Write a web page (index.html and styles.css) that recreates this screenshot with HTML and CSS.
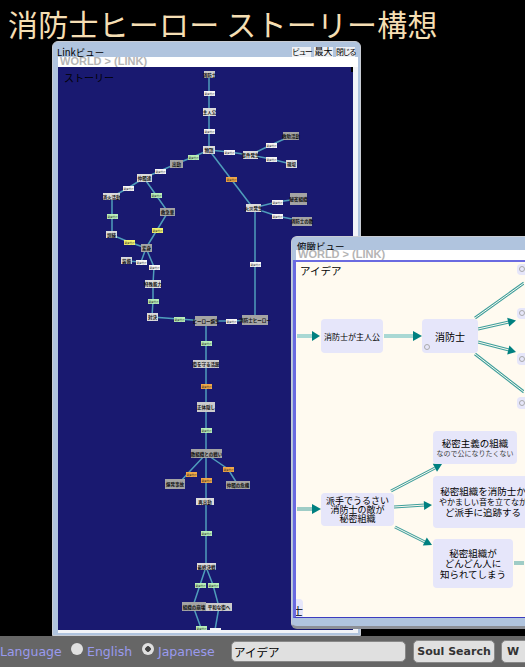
FILE: index.html
```html
<!DOCTYPE html>
<html lang="ja">
<head>
<meta charset="utf-8">
<title>消防士ヒーロー ストーリー構想</title>
<link rel="stylesheet" href="styles.css">
</head>
<body>
<h1 class="page-title">消防士ヒーロー ストーリー構想</h1>
<main class="desktop">
  <section class="win win-link">
    <header class="win-head">
      <span class="win-title">Linkビュー</span>
      <span class="win-actions"><button class="act act-3">ビュー</button><button class="act act-2">最大</button><button class="act act-3">閉じる</button></span>
    </header>
    <div class="crumb">WORLD &gt; (LINK)</div>
    <div class="view view-link">
      <span class="view-name">ストーリー</span>
      <span class="scroll-mark"></span>
      <svg class="graph" viewBox="58 67 295 564" width="295" height="564">
        <g class="links">
          <polyline points="209,74 209,150"/>
          <polyline points="209,150 229,152 250,155"/>
          <polyline points="250,155 271,145 291,136"/>
          <polyline points="250,155 271,159 291,164"/>
          <polyline points="209,150 231,179 253,208"/>
          <polyline points="253,208 277,202 298,199"/>
          <polyline points="253,208 277,216 302,221"/>
          <polyline points="209,150 193,157 176,164 160,171 144,178 128,188 112,197 112,235 129,242 146,248"/>
          <polyline points="144,178 156,195 168,212 157,230 146,248"/>
          <polyline points="146,248 141,262 127,261"/>
          <polyline points="146,248 154,267 153,284 153,301 152,317 179,319 206,321 231,321 255,320"/>
          <polyline points="255,208 255,320"/>
          <polyline points="206,321 206,567"/>
          <polyline points="206,454 191,470 180,482"/>
          <polyline points="206,454 228,469 238,485"/>
          <polyline points="206,567 200,585 193,606 201,628 203,634"/>
          <polyline points="206,567 213,585 219,607 215,630 214,634"/>
        </g>
        <g class="edges">
          <rect x="204" y="91" width="11" height="5"/><text x="209.500" y="95">関連付け</text>
          <rect x="204" y="129" width="11" height="5"/><text x="209.500" y="133">関連付け</text>
          <rect x="224" y="150" width="11" height="5"/><text x="229.500" y="154">関連付け</text>
          <rect x="266" y="143" width="11" height="5"/><text x="271.500" y="147">関連付け</text>
          <rect x="266" y="157" width="11" height="5"/><text x="271.500" y="161">関連付け</text>
          <rect class="e-orange" x="226" y="177" width="11" height="5"/><text x="231.500" y="181">関連付け</text>
          <rect x="272" y="200" width="11" height="5"/><text x="277.500" y="204">関連付け</text>
          <rect x="272" y="214" width="11" height="5"/><text x="277.500" y="218">関連付け</text>
          <rect class="e-green" x="188" y="155" width="11" height="5"/><text x="193.500" y="159">関連付け</text>
          <rect x="155" y="169" width="11" height="5"/><text x="160.500" y="173">関連付け</text>
          <rect x="123" y="186" width="11" height="5"/><text x="128.500" y="190">関連付け</text>
          <rect class="e-green" x="107" y="214" width="11" height="5"/><text x="112.500" y="218">関連付け</text>
          <rect class="e-yellow" x="124" y="240" width="11" height="5"/><text x="129.500" y="244">関連付け</text>
          <rect class="e-green" x="151" y="193" width="11" height="5"/><text x="156.500" y="197">関連付け</text>
          <rect class="e-yellow" x="152" y="228" width="11" height="5"/><text x="157.500" y="232">関連付け</text>
          <rect x="136" y="260" width="11" height="5"/><text x="141.500" y="264">関連付け</text>
          <rect x="149" y="265" width="11" height="5"/><text x="154.500" y="269">関連付け</text>
          <rect class="e-green" x="148" y="299" width="11" height="5"/><text x="153.500" y="303">関連付け</text>
          <rect class="e-green" x="174" y="317" width="11" height="5"/><text x="179.500" y="321">関連付け</text>
          <rect x="226" y="319" width="11" height="5"/><text x="231.500" y="323">関連付け</text>
          <rect x="250" y="262" width="11" height="5"/><text x="255.500" y="266">関連付け</text>
          <rect class="e-green" x="201" y="341" width="11" height="5"/><text x="206.500" y="345">関連付け</text>
          <rect class="e-orange" x="201" y="384" width="11" height="5"/><text x="206.500" y="388">関連付け</text>
          <rect class="e-green" x="201" y="428" width="11" height="5"/><text x="206.500" y="432">関連付け</text>
          <rect class="e-orange" x="186" y="472" width="11" height="5"/><text x="191.500" y="476">関連付け</text>
          <rect class="e-orange" x="223" y="467" width="11" height="5"/><text x="228.500" y="471">関連付け</text>
          <rect class="e-orange" x="201" y="478" width="11" height="5"/><text x="206.500" y="482">関連付け</text>
          <rect class="e-green" x="201" y="531" width="11" height="5"/><text x="206.500" y="535">関連付け</text>
          <rect class="e-green" x="195" y="583" width="11" height="5"/><text x="200.500" y="587">関連付け</text>
          <rect class="e-green" x="208" y="583" width="11" height="5"/><text x="213.500" y="587">関連付け</text>
          <rect class="e-green" x="196" y="626" width="11" height="5"/><text x="201.500" y="630">関連付け</text>
          <rect x="210" y="628" width="11" height="3"/>
        </g>
        <g class="nodes">
          <rect class="n-grey" x="204" y="71" width="11" height="7"/><text x="209.500" y="76.500">消防士</text>
          <rect x="203" y="108" width="13" height="8"/><text x="209.500" y="114">主人公</text>
          <rect x="203" y="146" width="12" height="8"/><text x="209" y="152">物語</text>
          <rect x="243" y="151" width="15" height="8"/><text x="250.500" y="157">事件発生</text>
          <rect class="n-dark" x="283" y="132" width="16" height="8"/><text x="291" y="138">救助活動</text>
          <rect x="286" y="160" width="11" height="8"/><text x="291.500" y="166">現場</text>
          <rect x="246" y="204" width="15" height="8"/><text x="253.500" y="210">火災発生</text>
          <rect class="n-dark" x="290" y="193" width="17" height="12"/><text x="298.500" y="201">秘密組織</text>
          <rect class="n-dark" x="292" y="217" width="20" height="9"/><text x="302" y="223">消防士の敵</text>
          <rect class="n-dark" x="170" y="160" width="13" height="8"/><text x="176.500" y="166">出動</text>
          <rect x="137" y="174" width="15" height="8"/><text x="144.500" y="180">仲間達</text>
          <rect x="103" y="193" width="17" height="7"/><text x="111.500" y="199">消火活動</text>
          <rect x="106" y="231" width="11" height="7"/><text x="111.500" y="236.500">訓練</text>
          <rect class="n-dark" x="160" y="208" width="15" height="8"/><text x="167.500" y="214">救急車</text>
          <rect class="n-dark" x="141" y="244" width="11" height="8"/><text x="146.500" y="250">変身</text>
          <rect x="121" y="257" width="11" height="7"/><text x="126.500" y="262.500">装備</text>
          <rect x="145" y="280" width="16" height="8"/><text x="153" y="286">特殊能力</text>
          <rect x="147" y="313" width="11" height="8"/><text x="152.500" y="319">対決</text>
          <rect class="n-dark" x="195" y="316" width="22" height="10"/><text x="206" y="323">ヒーロー誕生</text>
          <rect class="n-dark" x="242" y="315" width="26" height="10"/><text x="255" y="322">消防士ヒーロー</text>
          <rect class="n-grey" x="193" y="360" width="26" height="8"/><text x="206" y="366">街を守る活躍</text>
          <rect class="n-grey" x="197" y="402" width="18" height="10"/><text x="206" y="409">正体隠し</text>
          <rect class="n-dark" x="191" y="449" width="31" height="9"/><text x="206.500" y="455.500">敵組織との戦い</text>
          <rect class="n-dark" x="165" y="479" width="20" height="10"/><text x="175" y="486">爆発事故</text>
          <rect class="n-dark" x="226" y="481" width="24" height="8"/><text x="238" y="487">仲間の危機</text>
          <rect x="196" y="498" width="18" height="7"/><text x="205" y="503.500">再出動</text>
          <rect x="197" y="563" width="19" height="7"/><text x="206.500" y="568.500">最終決戦</text>
          <rect class="n-dark" x="182" y="602" width="24" height="9"/><text x="194" y="608.500">組織の崩壊</text>
          <rect class="n-grey" x="206" y="603" width="26" height="8"/><text x="219" y="609">平和な街へ</text>
        </g>
      </svg>
    </div>
  </section>

  <section class="win win-bird">
    <header class="win-head">
      <span class="win-title">俯瞰ビュー</span>
    </header>
    <div class="crumb">WORLD &gt; (LINK)</div>
    <div class="view view-bird">
      <span class="view-name">アイデア</span>
      <svg class="arrows" viewBox="297 261 228 358" width="228" height="358">
        <defs>
          <g id="rails">
            <line x1="476" y1="317" x2="525" y2="282"/>
            <line x1="479" y1="328" x2="510" y2="321"/>
            <line x1="479" y1="341" x2="510" y2="349"/>
            <line x1="476" y1="353" x2="525" y2="391"/>
            <line x1="298" y1="508" x2="314" y2="508"/>
            <line x1="392" y1="490" x2="436" y2="467"/>
            <line x1="395" y1="506" x2="426" y2="504"/>
            <line x1="396" y1="526" x2="426" y2="541"/>
            <line x1="515" y1="562" x2="525" y2="562"/>
          </g>
        </defs>
        <g class="pale">
          <line x1="298" y1="335" x2="314" y2="335"/>
          <line x1="385" y1="335" x2="415" y2="335"/>
        </g>
        <use class="rail" href="#rails"/>
        <use class="rail-core" href="#rails"/>
        <g class="heads">
          <polygon points="313,330 321,335 313,340"/>
          <polygon points="414,330 423,335 414,340"/>
          <polygon points="510.200,325.600 517,319.500 508.200,316.800"/>
          <polygon points="508.200,353.400 517,351 510.400,344.600"/>
          <polygon points="313,503 322,508 313,513"/>
          <polygon points="438,470.700 443,463 433.800,462.700"/>
          <polygon points="425.200,508.900 433,504 424.800,499.900"/>
          <polygon points="423.800,544.500 433,544 427.800,536.500"/>
        </g>
      </svg>
      <div class="card card-hero card-s">消防士が主人公</div>
      <div class="card card-fire card-m has-dot">消防士</div>
      <div class="card stub stub-1 has-dot"></div>
      <div class="card stub stub-2 has-dot"></div>
      <div class="card stub stub-3 has-dot"></div>
      <div class="card stub stub-4 has-dot"></div>
      <div class="card card-enemy card-l">派手でうるさい<br>消防士の敵が<br>秘密組織</div>
      <div class="card card-secret"><span class="big">秘密主義の組織</span><span class="sub">なので公になりたくない</span></div>
      <div class="card card-chase"><span class="big">秘密組織を消防士か</span><span class="mid">やかましい音を立てなが</span><span class="big">ど派手に追跡する</span></div>
      <div class="card card-known card-xl">秘密組織が<br>どんどん人に<br>知られてしまう</div>
      <div class="card card-edge">士</div>
    </div>
  </section>
</main>
<footer class="bar">
  <span class="lang-label">Language</span>
  <label class="lang-opt lang-en"><input class="radio" type="radio" name="lang">English</label>
  <label class="lang-opt lang-ja"><input class="radio" type="radio" name="lang" checked>Japanese</label>
  <input class="search" type="text" value="アイデア">
  <button class="btn btn-soul">Soul Search</button>
  <button class="btn btn-w">W</button>
</footer>
</body>
</html>
```

FILE: styles.css
```css
* { box-sizing: border-box; }

html, body {
  margin: 0;
  height: 667px;
  overflow: hidden;
  background: #000;
}

body {
  display: flex;
  flex-direction: column;
  font-family: "Noto Sans CJK JP", "Liberation Sans", sans-serif;
}

.page-title {
  flex: none;
  height: 41px;
  margin: 0;
  padding: 5px 0 0 8px;
  font-size: 30px;
  line-height: 36px;
  font-weight: 400;
  letter-spacing: 0.200px;
  color: #f5deb3;
  white-space: nowrap;
}

.desktop {
  position: relative;
  flex: none;
  height: 595px;
  overflow: hidden;
}

/* windows on the desktop */
.win {
  position: absolute;
  display: flex;
  flex-direction: column;
  background: #b0c4de;
  border: 1px solid #c8ccd4;
  border-radius: 6px 6px 0 0;
}

.win-link {
  left: 52px;
  top: 0;
  width: 309px;
  height: 595px;
  padding: 0 2px 2px 5px;
}

.win-bird {
  left: 291px;
  top: 195px;
  width: 300px;
  height: 393px;
  padding: 0 0 8px 1px;
  border-radius: 6px 0 0 6px;
  border-bottom: 3px solid #8c8f96;
  z-index: 1;
}

.win-head {
  flex: none;
  display: flex;
  justify-content: space-between;
  height: 15px;
  padding-top: 4px;
  font-size: 9.500px;
  line-height: 12px;
  color: #000;
}

.win-bird .win-head {
  height: 13px;
  padding: 3px 0 0 4px;
}

.win-title {
  margin-left: -1px;
  white-space: nowrap;
}

.win-bird .win-title { margin-left: 0; }

.win-actions {
  display: flex;
  gap: 3px;
  margin: 1px 3px 0 0;
}

.act {
  display: block;
  width: 19px;
  height: 10px;
  padding: 0;
  border: 0;
  background: #eef0f4;
  font-family: inherit;
  font-size: 9px;
  line-height: 10px;
  color: #000;
  white-space: nowrap;
}

.act-3 {
  font-size: 8px;
  letter-spacing: -1.600px;
}

.crumb {
  flex: none;
  height: 10px;
  padding-left: 2px;
  background: #fff;
  font-family: "Liberation Sans", sans-serif;
  font-size: 11px;
  font-weight: 700;
  line-height: 8px;
  color: #b4b4b4;
  white-space: nowrap;
}

.win-bird .crumb { margin-left: 3px; }

.view {
  position: relative;
  flex: 1;
  min-height: 0;
  overflow: hidden;
}

.view-link {
  background: #191970;
  border-right: 5px solid #f2f4f8;
  border-bottom: 3px solid #f2f4f8;
}

.view-bird {
  background: #fffaf0;
  border-top: 2px solid #6a6ae0;
  border-left: 3px solid #6a6ae0;
  border-bottom: 1px solid #3c3cc0;
}

.view-name {
  position: absolute;
  z-index: 2;
  font-size: 10px;
  line-height: 12px;
  color: #000;
}

.view-link .view-name { left: 6px; top: 5px; }
.view-bird .view-name { left: 4px; top: 3px; font-size: 10.500px; }

.scroll-mark {
  position: absolute;
  top: 0;
  right: 0;
  width: 2px;
  height: 5px;
  background: #000;
}

/* Link graph */
.graph { display: block; }

.links polyline {
  fill: none;
  stroke: #4f9dbb;
  stroke-width: 1.500;
}

.edges rect { fill: #f6f6f6; }
.edges .e-green { fill: #b8eeb8; }
.edges .e-yellow { fill: #f4f470; }
.edges .e-orange { fill: #f0a848; }

.edges text {
  font-size: 2.500px;
  text-anchor: middle;
  fill: #222;
}

.nodes rect { fill: #dcdcdc; }
.nodes .n-grey { fill: #cccccc; }
.nodes .n-dark { fill: #a4a4a4; }

.nodes text {
  font-size: 4.500px;
  font-weight: 700;
  text-anchor: middle;
  fill: #111;
}

/* Bird's-eye view */
.arrows {
  position: absolute;
  left: 0;
  top: 0;
}

.pale line {
  stroke: #a9d8d4;
  stroke-width: 4;
}

.rail { stroke: #3f9f9c; stroke-width: 3; }
.rail-core { stroke: #fffaf0; stroke-width: 1; }

.heads polygon { fill: #008080; }

.card {
  position: absolute;
  display: flex;
  flex-direction: column;
  align-items: center;
  justify-content: center;
  background: #e6e6fa;
  border-radius: 4px;
  color: #000;
  text-align: center;
  white-space: nowrap;
}

.card-s { font-size: 8px; }
.card-m { font-size: 10px; }
.card-l { font-size: 9px; line-height: 9px; }
.card-xl { font-size: 9.500px; line-height: 10.500px; }

.card-hero { left: 25px; top: 57px; width: 62px; height: 34px; }
.card-fire { left: 126px; top: 57px; width: 56px; height: 34px; }
.card-enemy { left: 25px; top: 231px; width: 73px; height: 33px; }
.card-secret { left: 137px; top: 169px; width: 84px; height: 33px; }
.card-chase { left: 137px; top: 214px; width: 100px; height: 52px; }
.card-known { left: 137px; top: 277px; width: 80px; height: 49px; }

.card-edge {
  left: 0;
  top: 337px;
  width: 7px;
  height: 22px;
  align-items: flex-end;
  overflow: hidden;
  border-radius: 0 4px 4px 0;
  font-size: 10px;
}

.stub { left: 221px; width: 30px; }
.stub-1 { top: 2px; height: 11px; }
.stub-2 { top: 46px; height: 11px; }
.stub-3 { top: 91px; height: 12px; }
.stub-4 { top: 135px; height: 12px; }

.has-dot::after {
  content: "";
  position: absolute;
  left: 2px;
  bottom: 3px;
  width: 4px;
  height: 4px;
  border: 1px solid #aaa;
  border-radius: 50%;
}

.big { font-size: 9.500px; line-height: 11px; }
.mid { font-size: 8px; line-height: 10px; }
.sub { font-size: 7px; line-height: 8px; color: #444; }

/* Bottom bar */
.bar {
  flex: none;
  display: flex;
  align-items: center;
  height: 31px;
  background: #666;
  font-family: "DejaVu Sans", sans-serif;
  font-size: 12.500px;
  color: #9a9aee;
  overflow: hidden;
}

.lang-label { width: 71px; flex: none; }

.lang-opt {
  display: flex;
  align-items: center;
  flex: none;
}

.lang-en { width: 71px; }
.lang-ja { width: 89px; }

.radio {
  appearance: none;
  flex: none;
  width: 12px;
  height: 12px;
  margin: -5px 4px 0 0;
  background: #e0e0e0;
  border-radius: 50%;
}

.radio:checked {
  background: radial-gradient(circle, #444 0 2.500px, #e0e0e0 3px);
}

.search {
  flex: none;
  width: 175px;
  height: 21px;
  margin-right: 7px;
  padding: 0 2px;
  border: 1px solid #888;
  border-radius: 5px;
  background: #e0e0e0;
  font-family: "Noto Sans CJK JP", sans-serif;
  font-size: 11.500px;
  color: #000;
  outline: none;
}

.btn {
  flex: none;
  height: 23px;
  padding: 0;
  border: 1px solid #888;
  border-radius: 5px;
  background: #e0e0e0;
  font-family: "DejaVu Sans", sans-serif;
  font-size: 11px;
  font-weight: 700;
  color: #333;
  white-space: nowrap;
}

.btn-soul { width: 82px; margin-right: 6px; }

.btn-w {
  width: 60px;
  padding-right: 36px;
  text-align: center;
}
```
